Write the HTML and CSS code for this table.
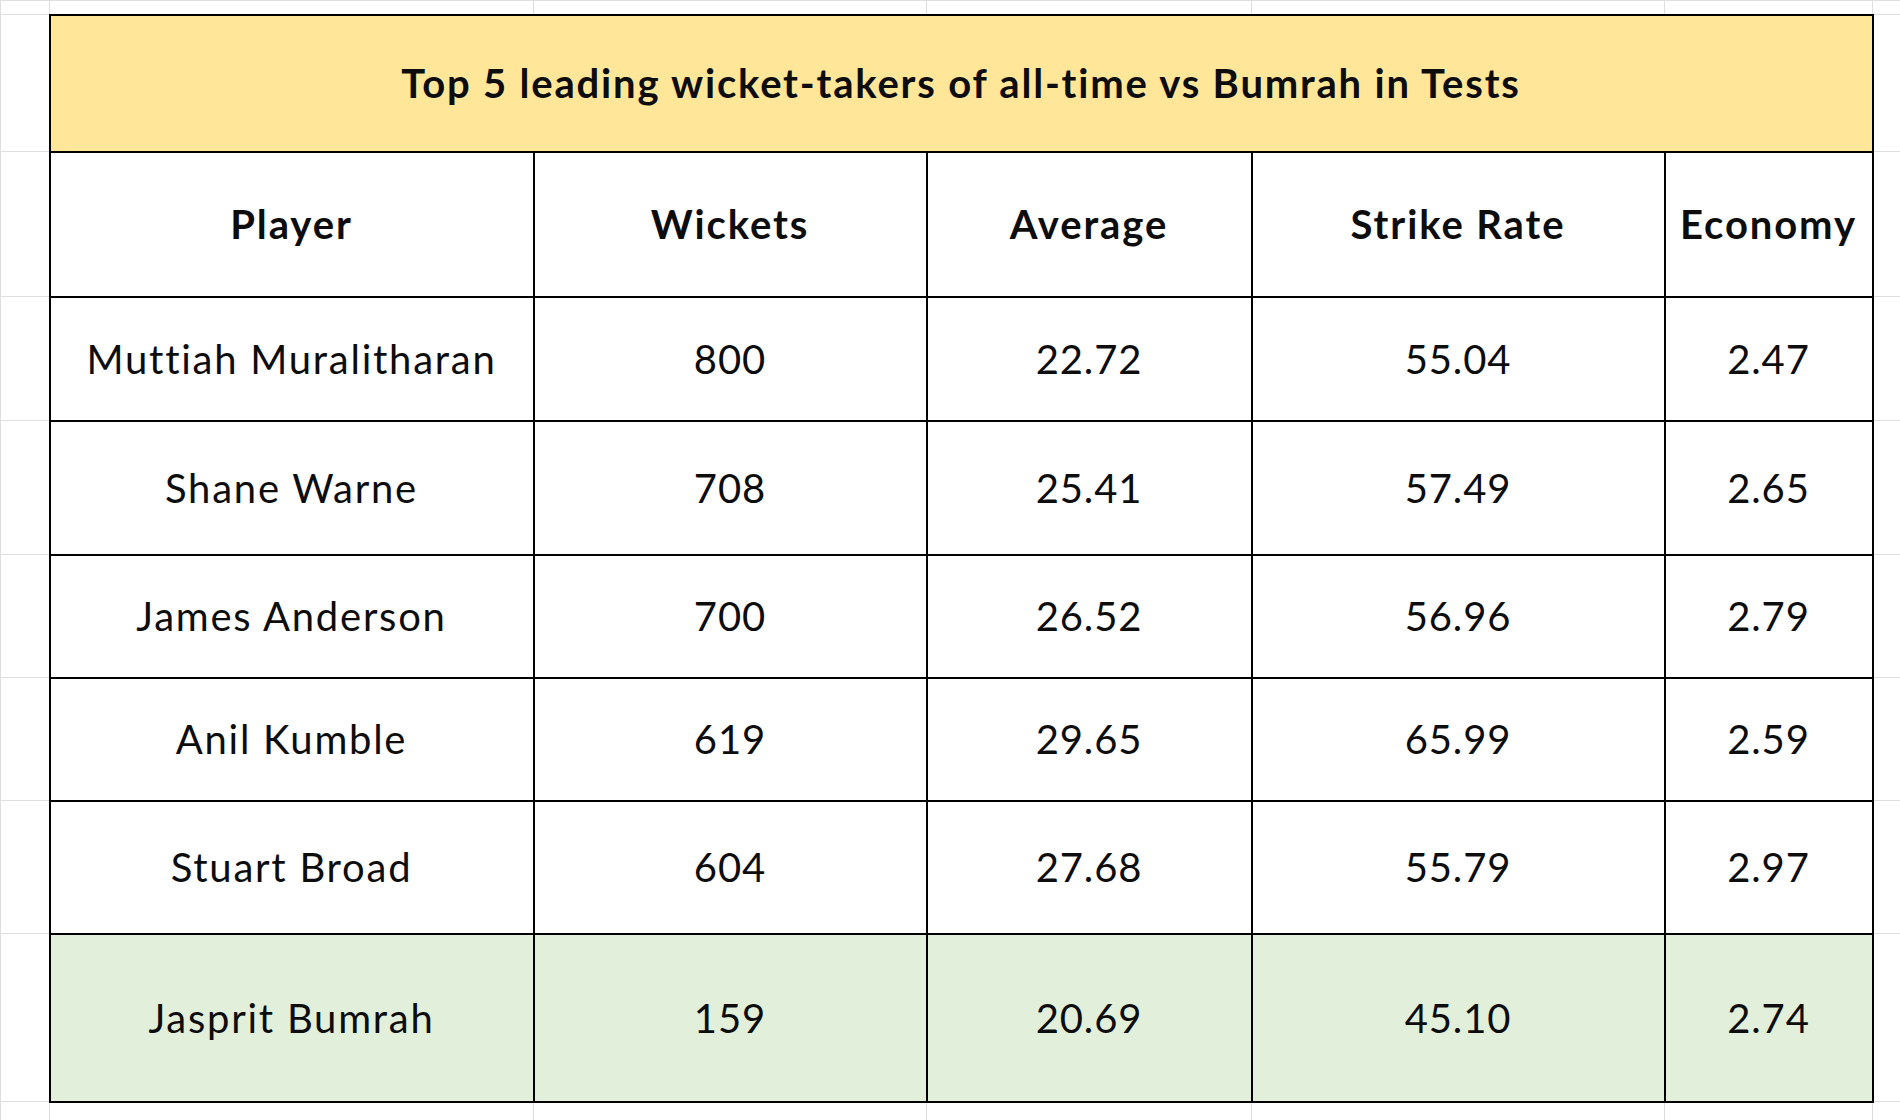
FILE: index.html
```html
<!DOCTYPE html>
<html lang="en">
<head>
<meta charset="utf-8">
<title>Top 5 leading wicket-takers vs Bumrah</title>
<link rel="stylesheet" href="styles.css">
</head>
<body>
<table class="sheet">
  <colgroup>
    <col class="c0"><col class="c1"><col class="c2"><col class="c3"><col class="c4"><col class="c5"><col class="c6">
  </colgroup>
  <tr class="r-top"><td></td><td></td><td></td><td></td><td></td><td></td><td></td></tr>
  <tr class="r-title"><td></td><td class="cell title" colspan="5">Top 5 leading wicket-takers of all-time vs Bumrah in Tests</td><td></td></tr>
  <tr class="r-head"><td></td><td class="cell head">Player</td><td class="cell head">Wickets</td><td class="cell head">Average</td><td class="cell head">Strike Rate</td><td class="cell head">Economy</td><td></td></tr>
  <tr class="r-1"><td></td><td class="cell name">Muttiah Muralitharan</td><td class="cell num">800</td><td class="cell num">22.72</td><td class="cell num">55.04</td><td class="cell num">2.47</td><td></td></tr>
  <tr class="r-2"><td></td><td class="cell name">Shane Warne</td><td class="cell num">708</td><td class="cell num">25.41</td><td class="cell num">57.49</td><td class="cell num">2.65</td><td></td></tr>
  <tr class="r-3"><td></td><td class="cell name">James Anderson</td><td class="cell num">700</td><td class="cell num">26.52</td><td class="cell num">56.96</td><td class="cell num">2.79</td><td></td></tr>
  <tr class="r-4"><td></td><td class="cell name">Anil Kumble</td><td class="cell num">619</td><td class="cell num">29.65</td><td class="cell num">65.99</td><td class="cell num">2.59</td><td></td></tr>
  <tr class="r-5"><td></td><td class="cell name">Stuart Broad</td><td class="cell num">604</td><td class="cell num">27.68</td><td class="cell num">55.79</td><td class="cell num">2.97</td><td></td></tr>
  <tr class="r-6 highlight"><td></td><td class="cell name">Jasprit Bumrah</td><td class="cell num">159</td><td class="cell num">20.69</td><td class="cell num">45.10</td><td class="cell num">2.74</td><td></td></tr>
  <tr class="r-bottom"><td></td><td></td><td></td><td></td><td></td><td></td><td></td></tr>
</table>
</body>
</html>
```

FILE: styles.css
```css
html, body {
  margin: 0;
  padding: 0;
  background: #ffffff;
  overflow: hidden;
}

.sheet {
  border-collapse: collapse;
  table-layout: fixed;
  width: 1900px;
  font-family: Lato, "Open Sans", "Liberation Sans", sans-serif;
  font-size: 40px;
  color: #0d0d0d;
}

.c0 { width: 49px; }
.c1 { width: 484px; }
.c2 { width: 393px; }
.c3 { width: 325px; }
.c4 { width: 413px; }
.c5 { width: 208px; }
.c6 { width: 28px; }

.sheet td {
  border: 1px solid #dedede;
  padding: 0;
  text-align: center;
  vertical-align: middle;
  white-space: nowrap;
  overflow: visible;
}

.sheet td.cell {
  border: 2px solid #000000;
}

.r-top { height: 14px; }
.r-title { height: 137px; }
.r-head { height: 145px; }
.r-1 { height: 124px; }
.r-2 { height: 134px; }
.r-3 { height: 123px; }
.r-4 { height: 123px; }
.r-5 { height: 133px; }
.r-6 { height: 168px; }
.r-bottom { height: 19px; }

.title {
  background: #ffe699;
  font-weight: 700;
  letter-spacing: 1.8px;
  padding-left: 2px;
}

.head {
  font-weight: 700;
  letter-spacing: 1.9px;
  padding-top: 4px;
}

.name {
  letter-spacing: 1.75px;
}

.num {
  letter-spacing: 0.9px;
}

.highlight .cell {
  background: #e2efda;
}
```
